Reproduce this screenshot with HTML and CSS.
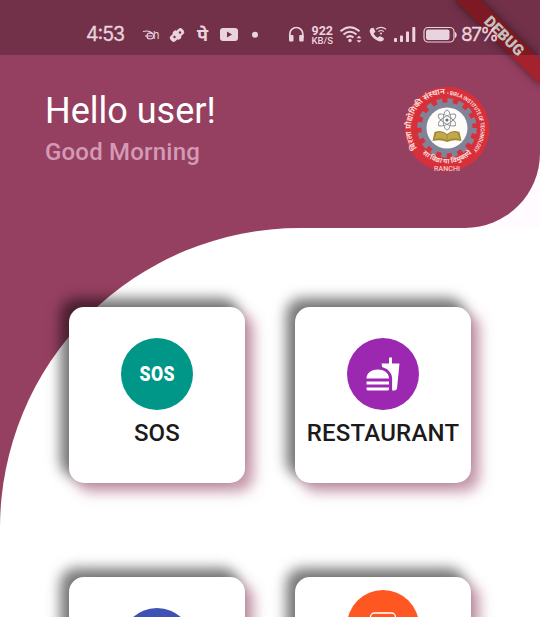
FILE: index.html
```html
<!DOCTYPE html>
<html lang="en">
<head>
<meta charset="utf-8">
<title>Home</title>
<link rel="stylesheet" href="styles.css">
</head>
<body>
<div class="screen">
  <header class="header">
    <div class="greeting">
      <h1 class="hello">Hello user!</h1>
      <p class="morning">Good Morning</p>
    </div>
    <svg class="crest" viewBox="0 0 86 86">
      <defs>
        <path id="arc-left" d="M13.200 62.200A34.500 34.500 0 0 1 45 8.200"/>
        <path id="arc-right" d="M43 9A34 34 0 0 1 62 71"/>
        <path id="arc-low" d="M15 64A36 36 0 0 0 71 64"/>
      </defs>
      <circle cx="43" cy="43" r="42.300" fill="#d8303a"/>
      <circle cx="43" cy="42" r="25.500" fill="#7f8499"/>
      <circle cx="43" cy="42" r="27" fill="none" stroke="#7f8499" stroke-width="5.500" stroke-dasharray="5.600 4.997"/>
      <circle cx="43" cy="42" r="20.500" fill="#fdfcfa"/>
      <g fill="none" stroke="#85898f" stroke-width=".9">
        <ellipse cx="43" cy="34" rx="3.800" ry="10"/>
        <ellipse cx="43" cy="34" rx="3.800" ry="10" transform="rotate(60 43 34)"/>
        <ellipse cx="43" cy="34" rx="3.800" ry="10" transform="rotate(120 43 34)"/>
      </g>
      <circle cx="43" cy="34" r="1.600" fill="#666b73"/>
      <path d="M30.500 46q7-3 12.500 2q5.500-5 12.500-2l2 9q-8-2-14.500 1q-6.500-3-14.500-1z" fill="#a38a32"/>
      <path d="M32.500 47q6-2 10 2v5q-5-3-12-1zM53.500 47q-6-2-10 2v5q5-3 12-1z" fill="#c0a94f"/>
      <g class="crest-text">
        <text font-size="8"><textPath href="#arc-left">बिरला प्रौद्योगिकी संस्थान</textPath></text>
        <text font-size="5.600" textLength="76" lengthAdjust="spacingAndGlyphs"><textPath href="#arc-right">• BIRLA INSTITUTE OF TECHNOLOGY</textPath></text>
        <text font-size="7"><textPath href="#arc-low" startOffset="50%" text-anchor="middle">सा विद्या या विमुक्तये</textPath></text>
        <text class="ranchi" x="43" y="84.500" text-anchor="middle" textLength="26">RANCHI</text>
      </g>
    </svg>
  </header>
  <main class="sheet">
    <div class="grid">
      <section class="card">
        <div class="disc teal"><span class="sos">SOS</span></div>
        <h2 class="label">SOS</h2>
      </section>
      <section class="card">
        <div class="disc purple">
          <svg class="food" viewBox="0 0 24 24" fill="#fff"><path d="M18.060 22.990h1.660c.84 0 1.530-.64 1.630-1.460L23 5.050h-5V1h-1.970v4.050h-4.970l.3 2.340c1.710.47 3.310 1.320 4.270 2.260 1.440 1.420 2.430 2.890 2.430 5.290v8.050zM1 21.990V21h15.030v.99c0 .55-.45 1-1.010 1H2.010c-.56 0-1.010-.45-1.010-1zm15.030-7c0-8-15.030-8-15.030 0h15.030zM1.020 17h15v2h-15z"/></svg>
        </div>
        <h2 class="label">RESTAURANT</h2>
      </section>
      <section class="card">
        <div class="disc blue"></div>
      </section>
      <section class="card two-line">
        <div class="disc orange">
          <svg class="outline" viewBox="0 0 30 30"><rect x="2.500" y="2" width="25" height="27" rx="4" fill="none" stroke="#fff" stroke-width="1.300"/></svg>
        </div>
      </section>
    </div>
  </main>
</div>
<div class="debug">DEBUG</div>
<div class="status">
  <svg width="540" height="55" viewBox="0 0 540 55" fill="#e9d3de">
    <text x="86" y="41" font-size="19.500" textLength="39" stroke="#e9d3de" stroke-width=".3">4:53</text>
    <g fill="none" stroke="#e9d3de" stroke-width="1.200">
      <path d="M143 31.500q6-1.500 9 1.500q-5-1-5 3q0 3 3 3q3.500 0 3.500-3t-4-3M145 36h7"/>
    </g>
    <text x="153" y="39" font-size="11" textLength="7">h</text>
    <g transform="rotate(-42 177 35)"><rect x="169" y="31.500" width="16" height="7" rx="2.500"/><rect x="174.500" y="30" width="5" height="10" rx="2"/></g>
    <g fill="#723049"><circle cx="174.500" cy="37" r="1.200"/><circle cx="180" cy="32.500" r="1.200"/></g>
    <text class="pe" x="197" y="41" font-size="18">पे</text>
    <rect x="220" y="28" width="18" height="13" rx="3"/><path d="M227 31.500v6l5-3z" fill="#723049"/>
    <circle cx="255" cy="34.700" r="3"/>
    <path d="M289.800 38v-4a6.500 6.500 0 0 1 13 0v4" fill="none" stroke="#e9d3de" stroke-width="1.700"/>
    <rect x="289" y="35" width="4.500" height="6.500" rx="1"/><rect x="299.200" y="35" width="4.500" height="6.500" rx="1"/>
    <text class="rate" x="311.500" y="35" font-size="12.800" textLength="21.500" lengthAdjust="spacingAndGlyphs">922</text>
    <text class="rate kbs" x="311.500" y="44" font-size="9.800" textLength="21.500" lengthAdjust="spacingAndGlyphs">KB/S</text>
    <g fill="none" stroke="#e9d3de" stroke-width="2">
      <path d="M340.500 31.300q9.500-8 19 0M343.500 34.500q6.500-5.500 13 0M346.500 37.600q3.500-3 7 0"/>
    </g>
    <circle cx="350" cy="40.500" r="1.700"/><path d="M356.500 38.300h5l-2.500-2.500zM356.500 40.300h5l-2.500 2.500z"/>
    <path d="M371 28.300l2.500-.5l2 4l-2 1.700q1.500 3 4.200 4.300l2-1.800l4 2v2q-2 2.500-6 .8q-6-2.500-8-9q-.3-2.500 1.300-3.500z"/>
    <g fill="none" stroke="#e9d3de" stroke-width="1.200"><path d="M376 29.300q5-4 10 0M378.300 31.600q2.800-2.200 5.500 0"/></g><circle cx="381" cy="33.600" r="1"/>
    <rect x="394" y="38" width="3" height="4" rx=".7"/><rect x="400" y="35.500" width="3" height="6.500" rx=".7"/><rect x="406" y="31.500" width="3" height="10.500" rx=".7"/><rect x="412.300" y="27" width="3" height="15" rx=".7"/>
    <rect x="424" y="27.500" width="30" height="14.500" rx="4" fill="none" stroke="#e9d3de" stroke-width="1.200"/><rect x="426" y="29.500" width="23.500" height="10.500" rx="2"/><path d="M455.500 32.500q1.500 2 0 5z" stroke="#e9d3de"/>
    <text x="461" y="41" font-size="19" textLength="38" stroke="#e9d3de" stroke-width=".3">87%</text>
  </svg>
</div>
</body>
</html>
```
FILE: styles.css
```css
* { box-sizing: border-box; margin: 0; padding: 0; }

body {
  width: 540px;
  height: 617px;
  overflow: hidden;
  position: relative;
  font-family: Roboto, "Noto Sans", sans-serif;
  background: #fff;
}

.screen {
  height: 617px;
  overflow: hidden;
  background: linear-gradient(#fffbff, #fffbff) right top / 240px 228px no-repeat, linear-gradient(#964061, #964061) left top / 300px 100% no-repeat;
}

.header {
  height: 228px;
  padding: 85px 50px 0 45px;
  display: flex;
  justify-content: space-between;
  align-items: flex-start;
  background: #964061;
  border-bottom-right-radius: 75px;
}

.hello { font-size: 36px; line-height: 50px; font-weight: 400; color: #fff; margin-top: 1px; }
.morning { font-size: 24px; line-height: 32px; font-weight: 500; letter-spacing: .2px; color: #d49ab5; }

.crest { width: 86px; height: 86px; margin-top: 1px; overflow: visible; }
.crest-text { fill: #fbe6e2; font-weight: 600; }
.ranchi { font-size: 7px; font-weight: 400; }

.sheet {
  height: 600px;
  background: #fff;
  border-top-left-radius: 300px;
  padding: 79px 69px 0;
}

.grid {
  display: grid;
  grid-template-columns: 176px 176px;
  column-gap: 50px;
  row-gap: 93.5px;
}

.card {
  height: 176px;
  padding-top: 31px;
  display: flex;
  flex-direction: column;
  align-items: center;
  background: #fff;
  border-radius: 15px;
  box-shadow: -7.5px -7.5px 13px 1.5px rgba(0, 0, 0, .52), 7.5px 7.5px 13px 1.5px rgba(150, 64, 97, .52);
}

.two-line { padding-top: 13px; }

.disc {
  width: 72px;
  height: 72px;
  border-radius: 50%;
  display: flex;
  align-items: center;
  justify-content: center;
}

.teal { background: #009688; }
.purple { background: #9c27b0; }
.blue { background: #3f51b5; }
.orange { background: #ff5722; }

.sos { color: #fff; font-size: 20px; font-weight: 900; line-height: 24px; letter-spacing: .5px; transform: scaleX(.88); }
.food { width: 36px; height: 36px; }
.outline { width: 30px; height: 30px; }
.label { font-size: 24px; line-height: 28px; font-weight: 500; letter-spacing: .2px; color: #1b1b1b; margin-top: 9px; white-space: nowrap; }

.debug {
  position: absolute;
  left: 444px;
  top: 27px;
  width: 120px;
  height: 18px;
  transform: rotate(45deg);
  background: rgba(168, 24, 28, .75);
  box-shadow: 0 0 9px rgba(0, 0, 0, .5);
  color: #fff;
  font-size: 15.3px;
  font-weight: 900;
  line-height: 18px;
  text-align: center;
}

.status {
  position: absolute;
  inset: 0 0 auto 0;
  height: 55px;
  background: rgba(0, 0, 0, .24);
  font-family: Inter, "Noto Sans", sans-serif;
}

.status svg { display: block; }
.pe { font-weight: 700; }
.rate { font-family: Roboto, sans-serif; font-weight: 700; }
.kbs { font-weight: 500; }
```
